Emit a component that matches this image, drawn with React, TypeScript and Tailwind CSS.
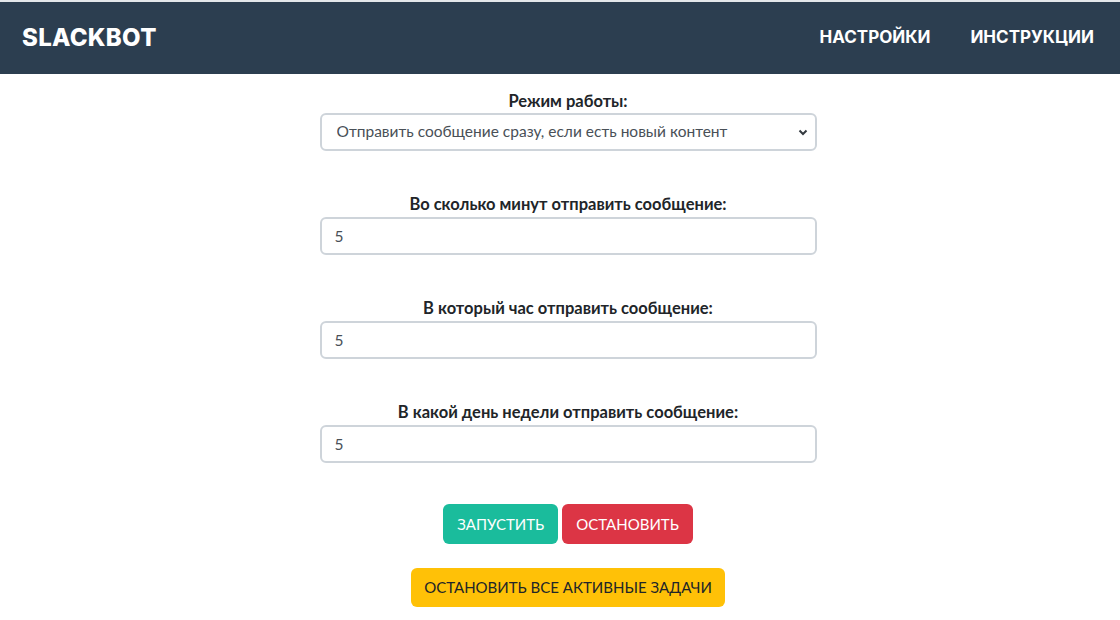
import React, { useState } from 'react';

const fields = [
  'Во сколько минут отправить сообщение:',
  'В который час отправить сообщение:',
  'В какой день недели отправить сообщение:',
];

function Field({ label, value }: { label: string; value: string }) {
  return (
    <div className="flex flex-col">
      <label className="text-center text-[16.5px] leading-[22px] font-bold text-[#212529] mb-[2px]">{label}</label>
      <input
        defaultValue={value}
        className="h-[38px] w-full rounded-[6px] border-2 border-[#ced4da] bg-white px-[13px] text-[15.5px] text-[#495057] outline-none"
      />
    </div>
  );
}

export default function App() {
  const [mode, setMode] = useState('instant');

  return (
    <div className="min-h-screen bg-white font-['Lato','Liberation_Sans',sans-serif]">
      <div className="border-t-2 border-[#e4e7ea]">
        <header className="flex h-[72px] items-center justify-between bg-[#2c3e50] pl-[22px] pr-[26px]">
          <a className="font-['Inter',sans-serif] text-[24px] font-extrabold tracking-[0.3px] text-white">SLACKBOT</a>
          <nav className="flex gap-[40px] font-['Inter',sans-serif] text-[17px] font-bold text-white">
            <a>НАСТРОЙКИ</a>
            <a>ИНСТРУКЦИИ</a>
          </nav>
        </header>
      </div>

      <main className="mx-auto flex w-[513px] flex-col pl-[16px] pt-[16px]">
        <div className="flex flex-col">
          <label className="text-center text-[16.5px] leading-[22px] font-bold text-[#212529] mb-[1px]">Режим работы:</label>
          <div className="relative">
            <select
              value={mode}
              onChange={(e) => setMode(e.target.value)}
              className="h-[38px] w-full appearance-none rounded-[6px] border-2 border-[#ced4da] bg-white pl-[15px] text-[15.5px] text-[#495057] outline-none"
            >
              <option value="instant">Отправить сообщение сразу, если есть новый контент</option>
              <option value="minutes">Каждые N минут</option>
            </select>
            <svg className="pointer-events-none absolute right-[9px] top-[16px]" width="10" height="7" viewBox="0 0 10 7">
              <path d="M1.5 1.5 L5 5 L8.5 1.5" fill="none" stroke="#343a40" strokeWidth="2" />
            </svg>
          </div>
        </div>

        <div className="mt-[42px] flex flex-col gap-[42px]">
          {fields.map((f) => (
            <Field key={f} label={f} value="5" />
          ))}
        </div>

        <div className="mt-[41px] flex justify-center gap-[4px]">
          <button className="h-[40px] rounded-[6px] bg-[#1abc9c] px-[14px] text-[15px] text-white">ЗАПУСТИТЬ</button>
          <button className="h-[40px] rounded-[6px] bg-[#dc3545] px-[14px] text-[15px] text-white">ОСТАНОВИТЬ</button>
        </div>

        <div className="mt-[24px] flex justify-center">
          <button className="h-[39px] rounded-[6px] bg-[#ffc107] px-[13px] text-[15px] text-[#212529]">
            ОСТАНОВИТЬ ВСЕ АКТИВНЫЕ ЗАДАЧИ
          </button>
        </div>
      </main>
    </div>
  );
}
